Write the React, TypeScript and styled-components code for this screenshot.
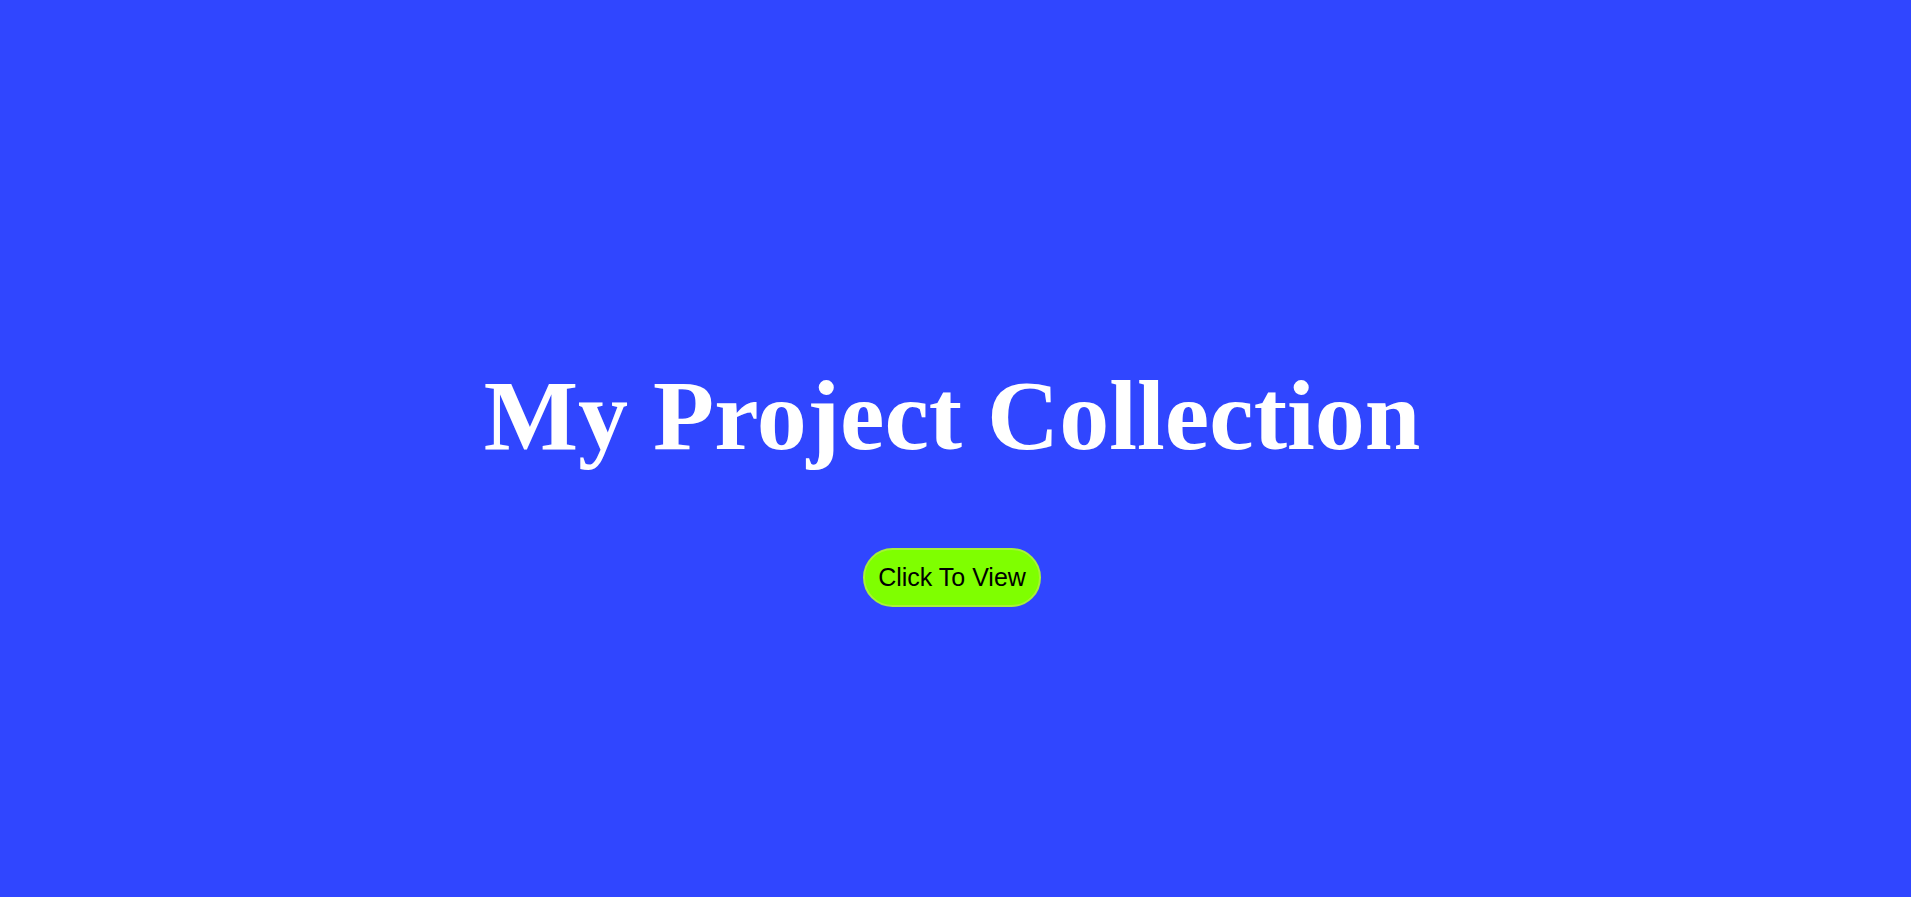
import React from "react";
import styled, { createGlobalStyle } from "styled-components";

const Global = createGlobalStyle`
  html, body { margin: 0; padding: 0; }
  body { background: #3046ff; }
`;

const Page = styled.main`
  box-sizing: border-box;
  min-height: 100vh;
  padding: 67px 7px 0 0;
  display: flex;
  flex-direction: column;
  align-items: center;
  justify-content: center;
  background: #3046ff;
`;

const Title = styled.h1`
  margin: 0;
  font-family: "Liberation Serif", "Times New Roman", serif;
  font-weight: 700;
  font-size: 100px;
  line-height: 1.15;
  color: #ffffff;
`;

const Button = styled.button`
  margin-top: 75px;
  width: 178px;
  height: 59px;
  border-radius: 30px;
  border: 2px solid #a6f03a;
  background: #7fff00;
  color: #000;
  font-family: "Liberation Sans", Arial, sans-serif;
  font-size: 25px;
  cursor: pointer;
`;

export default function App() {
  return (
    <>
      <Global />
      <Page>
        <Title>My Project Collection</Title>
        <Button>Click To View</Button>
      </Page>
    </>
  );
}
